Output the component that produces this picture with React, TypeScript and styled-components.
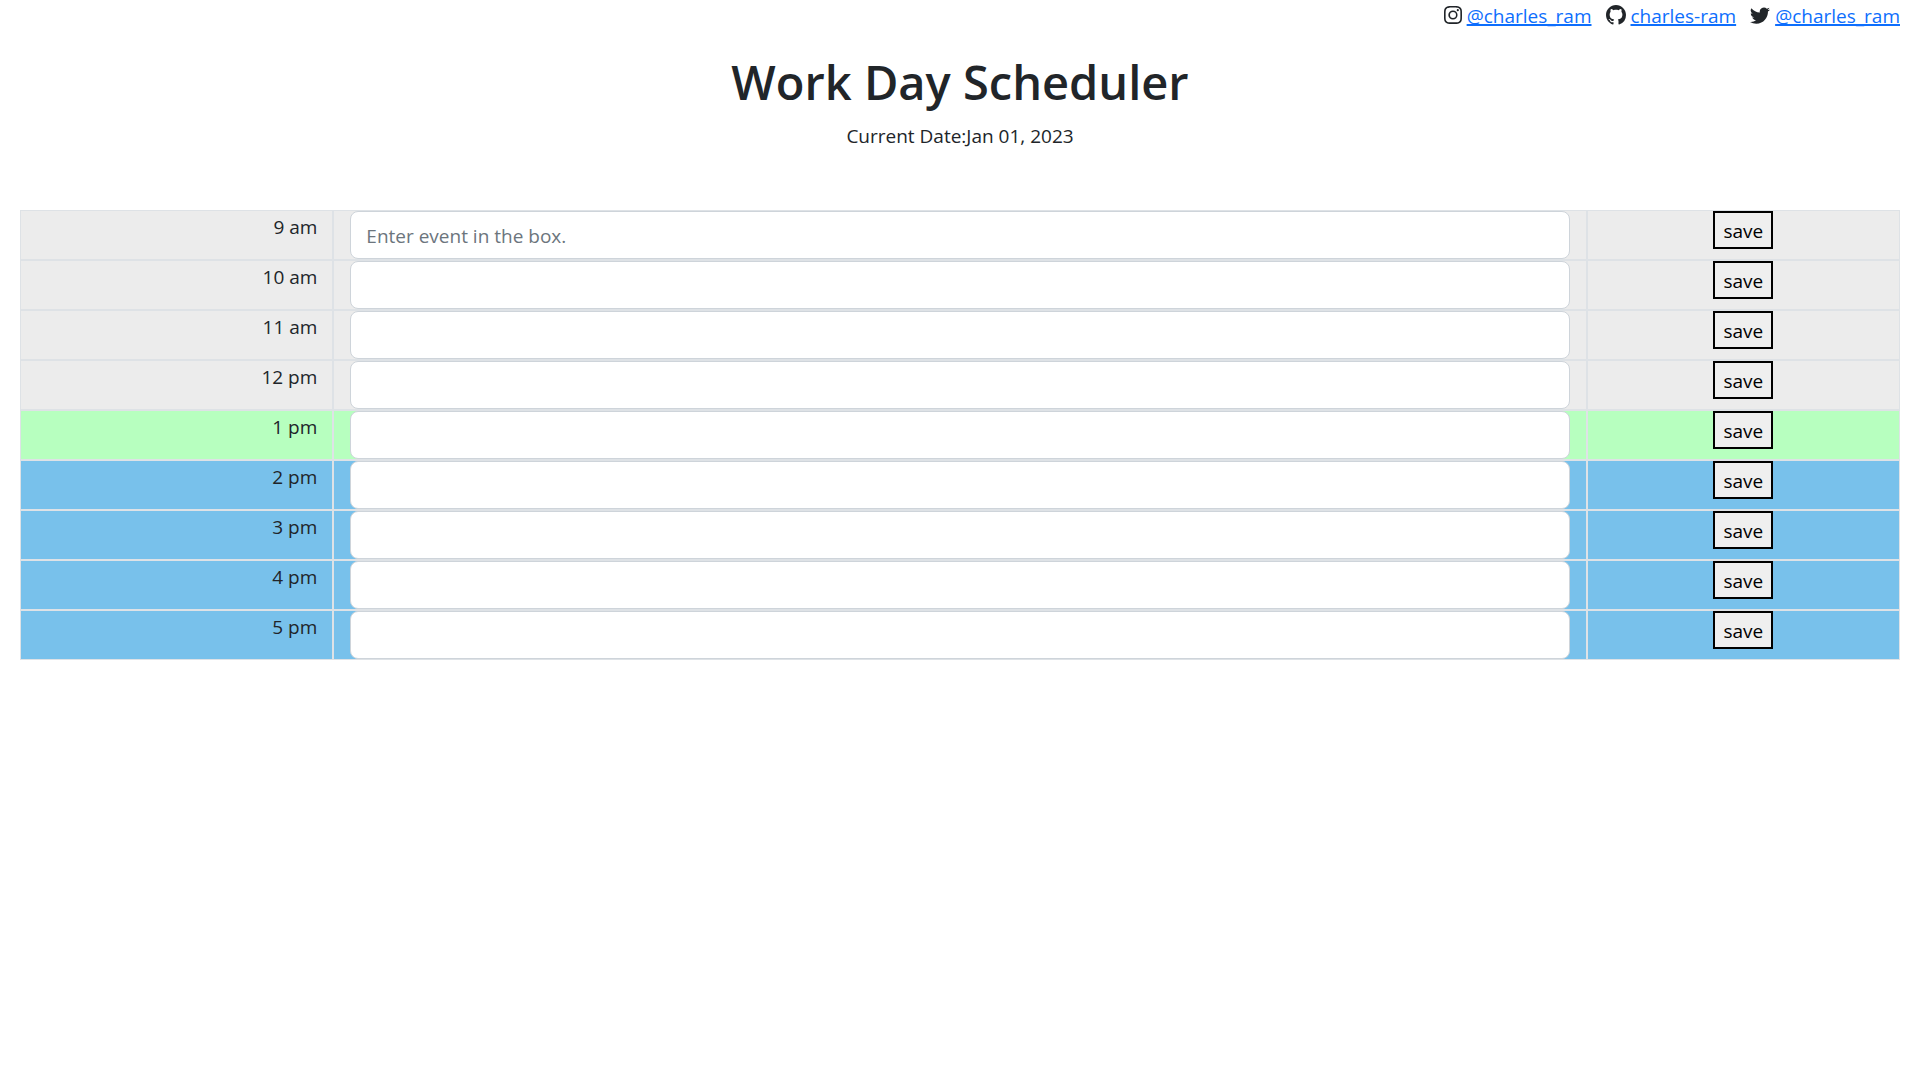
import React from "react";
import styled, { createGlobalStyle } from "styled-components";
import { BsGithub, BsInstagram, BsTwitter } from "react-icons/bs";

const GlobalStyle = createGlobalStyle`
  *, *::before, *::after { box-sizing: border-box; }
  body {
    margin: 0;
    background: #fff;
    color: #212529;
    font-family: "Open Sans", "Noto Sans", sans-serif;
    font-size: 19px;
    line-height: 30px;
  }
`;

const Page = styled.div`
  padding: 0 20px;
`;

const SocialNav = styled.nav`
  display: flex;
  justify-content: flex-end;
  gap: 14px;
  padding-top: 1px;
`;

const SocialItem = styled.span`
  display: flex;
  align-items: center;
  gap: 5px;

  svg {
    margin-bottom: 2px;
  }
`;

const SocialLink = styled.a`
  color: #0d6efd;
  text-decoration: underline;
  text-decoration-thickness: 2px;
  text-decoration-skip-ink: none;
  text-underline-offset: 1px;
`;

const Header = styled.header`
  padding: 21px 0 59px;
  text-align: center;
`;

const Title = styled.h1`
  margin: 0 0 9px;
  font-size: 47px;
  font-weight: 600;
  line-height: 60px;
`;

const CurrentDate = styled.p`
  margin: 0;
`;

type Phase = "past" | "present" | "future";

const phaseColors: Record<Phase, string> = {
  past: "#ececec",
  present: "#b7ffbf",
  future: "#78c1eb",
};

const Schedule = styled.main`
  display: flex;
  flex-direction: column;
`;

const TimeBlock = styled.form<{ $phase: Phase }>`
  display: grid;
  grid-template-columns: 2fr 8fr 2fr;
  background: ${({ $phase }) => phaseColors[$phase]};
`;

const Cell = styled.div`
  min-width: 0;
  padding: 0 16px;
  border: 1px solid #dee2e6;
`;

const TimeCell = styled(Cell)`
  padding: 1px 15px 0;
  text-align: right;
`;

const ActionCell = styled(Cell)`
  text-align: center;
`;

const EventInput = styled.input`
  display: block;
  width: 100%;
  height: 48px;
  padding: 9px 15px 7px;
  border: 1px solid #ced4da;
  border-radius: 8px;
  background: #fff;
  color: #212529;
  font: inherit;

  &::placeholder {
    color: #6c757d;
    opacity: 1;
  }
`;

const SaveButton = styled.button`
  display: inline-block;
  height: 38px;
  padding: 3px 8px 1px;
  border: 2px solid #000;
  background: #efefef;
  color: #000;
  font: inherit;
  vertical-align: top;
`;

const socials = [
  { Icon: BsInstagram, name: "@charles_ram", href: "#instagram", size: 18 },
  { Icon: BsGithub, name: "charles-ram", href: "#github", size: 20 },
  { Icon: BsTwitter, name: "@charles_ram", href: "#twitter", size: 20 },
];

const hours: { label: string; phase: Phase; placeholder?: string }[] = [
  { label: "9 am", phase: "past", placeholder: "Enter event in the box." },
  { label: "10 am", phase: "past" },
  { label: "11 am", phase: "past" },
  { label: "12 pm", phase: "past" },
  { label: "1 pm", phase: "present" },
  { label: "2 pm", phase: "future" },
  { label: "3 pm", phase: "future" },
  { label: "4 pm", phase: "future" },
  { label: "5 pm", phase: "future" },
];

export default function App() {
  return (
    <>
      <GlobalStyle />
      <Page>
        <SocialNav>
          {socials.map(({ Icon, name, href, size }) => (
            <SocialItem key={href}>
              <Icon size={size} aria-hidden />
              <SocialLink href={href}>{name}</SocialLink>
            </SocialItem>
          ))}
        </SocialNav>
        <Header>
          <Title>Work Day Scheduler</Title>
          <CurrentDate>Current Date:Jan 01, 2023</CurrentDate>
        </Header>
        <Schedule>
          {hours.map(({ label, phase, placeholder }, index) => (
            <TimeBlock
              key={label}
              $phase={phase}
              onSubmit={(event) => event.preventDefault()}
            >
              <TimeCell>
                <label htmlFor={`event-${index}`}>{label}</label>
              </TimeCell>
              <Cell>
                <EventInput
                  id={`event-${index}`}
                  type="text"
                  placeholder={placeholder}
                />
              </Cell>
              <ActionCell>
                <SaveButton type="submit">save</SaveButton>
              </ActionCell>
            </TimeBlock>
          ))}
        </Schedule>
      </Page>
    </>
  );
}
